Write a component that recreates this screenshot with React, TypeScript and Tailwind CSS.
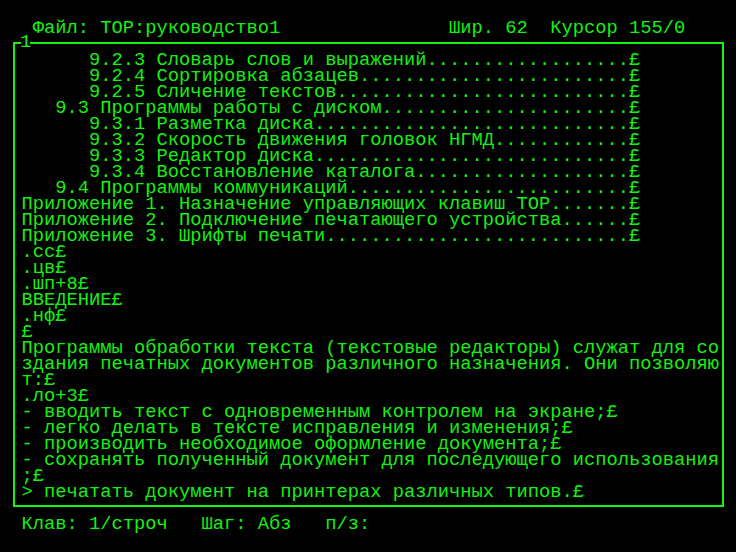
import { FC } from 'react';

// dotted TOC line: text, dots up to column 54, then the paragraph mark
const toc = (text: string) => text + '.'.repeat(Math.max(0, 54 - text.length)) + '£';

const lines: string[] = [
  toc('      9.2.3 Словарь слов и выражений'),
  toc('      9.2.4 Сортировка абзацев'),
  toc('      9.2.5 Сличение текстов'),
  toc('   9.3 Программы работы с диском'),
  toc('      9.3.1 Разметка диска'),
  toc('      9.3.2 Скорость движения головок НГМД'),
  toc('      9.3.3 Редактор диска'),
  toc('      9.3.4 Восстановление каталога'),
  toc('   9.4 Программы коммуникаций'),
  toc('Приложение 1. Назначение управляющих клавиш ТОР'),
  toc('Приложение 2. Подключение печатающего устройства'),
  toc('Приложение 3. Шрифты печати'),
  '.сс£',
  '.цв£',
  '.шп+8£',
  'ВВЕДЕНИЕ£',
  '.нф£',
  '£',
  'Программы обработки текста (текстовые редакторы) служат для со',
  'здания печатных документов различного назначения. Они позволяю',
  'т:£',
  '.ло+3£',
  '- вводить текст с одновременным контролем на экране;£',
  '- легко делать в тексте исправления и изменения;£',
  '- производить необходимое оформление документа;£',
  '- сохранять полученный документ для последующего использования',
  ';£',
  '> печатать документ на принтерах различных типов.£',
];

const Row: FC<{ text: string }> = ({ text }) => (
  <div className="h-4 leading-4 whitespace-pre">{text}</div>
);

export default function App() {
  return (
    <div
      className="w-[736px] h-[552px] bg-black text-[#14f014] text-[18.75px] leading-4 pt-5 overflow-hidden"
      style={{ fontFamily: '"Liberation Mono", "DejaVu Sans Mono", monospace' }}
    >
      {/* status line */}
      <div className="pl-[21.5px]">
        <Row text={' Файл: ТОР:руководство1               Шир. 62  Курсор 155/0'} />
      </div>

      {/* editor window */}
      <div className="relative mt-[6px] ml-[13px] w-[711px] border-2 border-[#14f014] pl-[6.5px] pt-2 pb-[5px]">
        <span className="absolute left-[6px] top-[-10px] w-[9px] h-4 bg-black flex justify-center">
          <span className="leading-4">1</span>
        </span>
        {lines.map((l, i) => (
          <Row key={i} text={l} />
        ))}
      </div>

      {/* bottom line */}
      <div className="pl-[21.5px] mt-[9px]">
        <Row text={'Клав: 1/строч   Шаг: Абз   п/з:'} />
      </div>
    </div>
  );
}
